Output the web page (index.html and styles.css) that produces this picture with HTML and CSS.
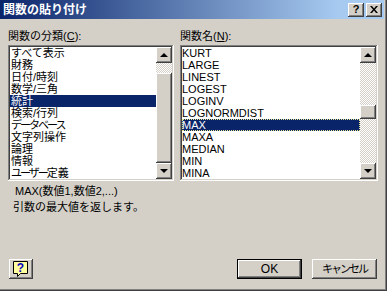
FILE: index.html
```html
<!DOCTYPE html>
<html lang="ja">
<head>
<meta charset="utf-8">
<title>関数の貼り付け</title>
<link rel="stylesheet" href="styles.css">
</head>
<body>
<div class="window">
  <div class="titlebar">
    <span class="title">関数の貼り付け</span>
    <div class="caption-buttons">
      <span class="cap-btn cap-help">?</span>
      <span class="cap-btn cap-close">
        <svg width="8" height="7" viewBox="0 0 8 7"><path d="M0 0h2l2 2.5L6 0h2L5 3.5 8 7H6L4 4.5 2 7H0l3-3.5z" fill="#000"/></svg>
      </span>
    </div>
  </div>
  <div class="content">
    <div class="lists">
      <div class="col">
        <div class="label">関数の分類(<u>C</u>):</div>
        <div class="listbox">
          <ul class="items">
            <li>すべて表示</li>
            <li>財務</li>
            <li>日付/時刻</li>
            <li>数学/三角</li>
            <li class="sel">統計</li>
            <li>検索/行列</li>
            <li><span class="kana">データベース</span></li>
            <li>文字列操作</li>
            <li>論理</li>
            <li>情報</li>
            <li><span class="kana">ユーザー</span>定義</li>
          </ul>
          <div class="scrollbar">
            <span class="sb-btn"><span class="arrow-up"></span></span>
            <div class="track"><span class="thumb thumb-left"></span></div>
            <span class="sb-btn"><span class="arrow-down"></span></span>
          </div>
        </div>
      </div>
      <div class="col">
        <div class="label">関数名(<u>N</u>):</div>
        <div class="listbox">
          <ul class="items latin">
            <li>KURT</li>
            <li>LARGE</li>
            <li>LINEST</li>
            <li>LOGEST</li>
            <li>LOGINV</li>
            <li>LOGNORMDIST</li>
            <li class="sel focus">MAX</li>
            <li>MAXA</li>
            <li>MEDIAN</li>
            <li>MIN</li>
            <li>MINA</li>
          </ul>
          <div class="scrollbar">
            <span class="sb-btn"><span class="arrow-up"></span></span>
            <div class="track"><span class="thumb thumb-right"></span></div>
            <span class="sb-btn"><span class="arrow-down"></span></span>
          </div>
        </div>
      </div>
    </div>
    <div class="syntax">MAX(数値1,数値2,...)</div>
    <div class="desc">引数の最大値を返します。</div>
    <div class="buttons">
      <span class="btn btn-help">
        <svg width="18" height="19" viewBox="0 0 18 19">
          <path d="M1.5 1.5h14v12h-7l-3 3v-3h-4z" fill="#ffffa0" stroke="#000"/>
          <text x="8.5" y="12" text-anchor="middle" font-family="Liberation Sans, sans-serif" font-weight="bold" font-size="12" fill="#0000c0">?</text>
        </svg>
      </span>
      <span class="spacer"></span>
      <span class="btn btn-default"><span class="btn-inner">OK</span></span>
      <span class="btn btn-cancel"><span class="kana">キャンセル</span></span>
    </div>
  </div>
</div>
</body>
</html>
```

FILE: styles.css
```css
* { box-sizing: border-box; }
html, body { margin: 0; padding: 0; }
body {
  width: 387px;
  height: 291px;
  background: #d4d0c8;
  font-family: "Liberation Sans", "Noto Sans CJK JP", sans-serif;
  font-size: 11px;
  color: #000;
  overflow: hidden;
}
.window {
  width: 387px;
  height: 291px;
  display: flex;
  flex-direction: column;
  background: #d4d0c8;
  box-shadow: inset -1px -1px #404040, inset -2px -2px #808080;
  padding-right: 3px;
  padding-bottom: 3px;
}
.titlebar {
  height: 19px;
  flex: none;
  display: flex;
  align-items: center;
  justify-content: space-between;
  background: linear-gradient(to right, #0a246a, #a6caf0 88%);
  padding-left: 3px;
  padding-right: 2px;
}
.title {
  color: #fff;
  font-weight: bold;
  font-size: 12px;
  line-height: 14px;
}
.caption-buttons {
  display: flex;
  gap: 2px;
}
.cap-btn {
  width: 16px;
  height: 14px;
  display: flex;
  align-items: center;
  justify-content: center;
  background: #d4d0c8;
  box-shadow: inset -1px -1px #404040, inset 1px 1px #fff, inset -2px -2px #808080, inset 2px 2px #d4d0c8;
  font-weight: bold;
  font-size: 11px;
  line-height: 11px;
}
.content {
  flex: 1;
  display: flex;
  flex-direction: column;
  padding: 11px 7px 9px 8px;
}
.lists {
  display: grid;
  grid-template-columns: 166px 198px;
  column-gap: 6px;
}
.label {
  height: 15px;
  line-height: 13px;
}
.label u { text-decoration: underline; }
.listbox {
  height: 136px;
  display: flex;
  background: #fff;
  padding: 2px;
  box-shadow: inset -1px -1px #fff, inset 1px 1px #808080, inset -2px -2px #d4d0c8, inset 2px 2px #404040;
}
.items {
  list-style: none;
  margin: 0;
  padding: 0;
  flex: 1;
}
.items li {
  height: 12px;
  line-height: 12px;
  padding-left: 1px;
  white-space: nowrap;
}
.items.latin li { padding-left: 0; }
.kana { letter-spacing: -2px; }
.items li.sel {
  background: #0a246a;
  color: #fff;
}
.items li.focus {
  outline: 1px dotted #e8e890;
  outline-offset: -1px;
}
.scrollbar {
  width: 16px;
  display: flex;
  flex-direction: column;
}
.sb-btn {
  width: 16px;
  height: 16px;
  flex: none;
  display: flex;
  align-items: center;
  justify-content: center;
  background: #d4d0c8;
  box-shadow: inset -1px -1px #404040, inset 1px 1px #fff, inset -2px -2px #808080, inset 2px 2px #d4d0c8;
}
.arrow-up {
  width: 0; height: 0;
  border-left: 4px solid transparent;
  border-right: 4px solid transparent;
  border-bottom: 4px solid #000;
}
.arrow-down {
  width: 0; height: 0;
  border-left: 4px solid transparent;
  border-right: 4px solid transparent;
  border-top: 4px solid #000;
}
.track {
  flex: 1;
  display: flex;
  flex-direction: column;
  background-color: #d4d0c8;
  background-image: conic-gradient(#fff 25%, #d4d0c8 0 50%, #fff 0 75%, #d4d0c8 0);
  background-size: 2px 2px;
}
.thumb {
  display: block;
  width: 16px;
  background: #d4d0c8;
  box-shadow: inset -1px -1px #404040, inset 1px 1px #fff, inset -2px -2px #808080, inset 2px 2px #d4d0c8;
}
.thumb-left { margin-top: 10px; flex: 1; }
.thumb-right { margin-top: 42px; height: 14px; }
.syntax {
  margin-top: 4px;
  margin-left: 7px;
  line-height: 12px;
  height: 16px;
}
.desc {
  margin-left: 5px;
  line-height: 12px;
}
.buttons {
  margin-top: auto;
  display: flex;
  align-items: center;
  gap: 10px;
  padding-left: 1px;
}
.spacer { flex: 1; }
.btn {
  height: 20px;
  display: flex;
  align-items: center;
  justify-content: center;
  background: #d4d0c8;
  box-shadow: inset -1px -1px #404040, inset 1px 1px #fff, inset -2px -2px #808080, inset 2px 2px #d4d0c8;
  font-size: 11px;
  line-height: 12px;
}
.btn-help { width: 24px; }
.btn-cancel { width: 65px; }
.btn-default {
  width: 65px;
  border: 1px solid #000;
  box-shadow: none;
  padding: 0;
}
.btn-inner {
  width: 100%;
  height: 100%;
  display: flex;
  align-items: center;
  justify-content: center;
  box-shadow: inset -1px -1px #404040, inset 1px 1px #fff, inset -2px -2px #808080, inset 2px 2px #d4d0c8;
  font-size: 12px;
}
```
